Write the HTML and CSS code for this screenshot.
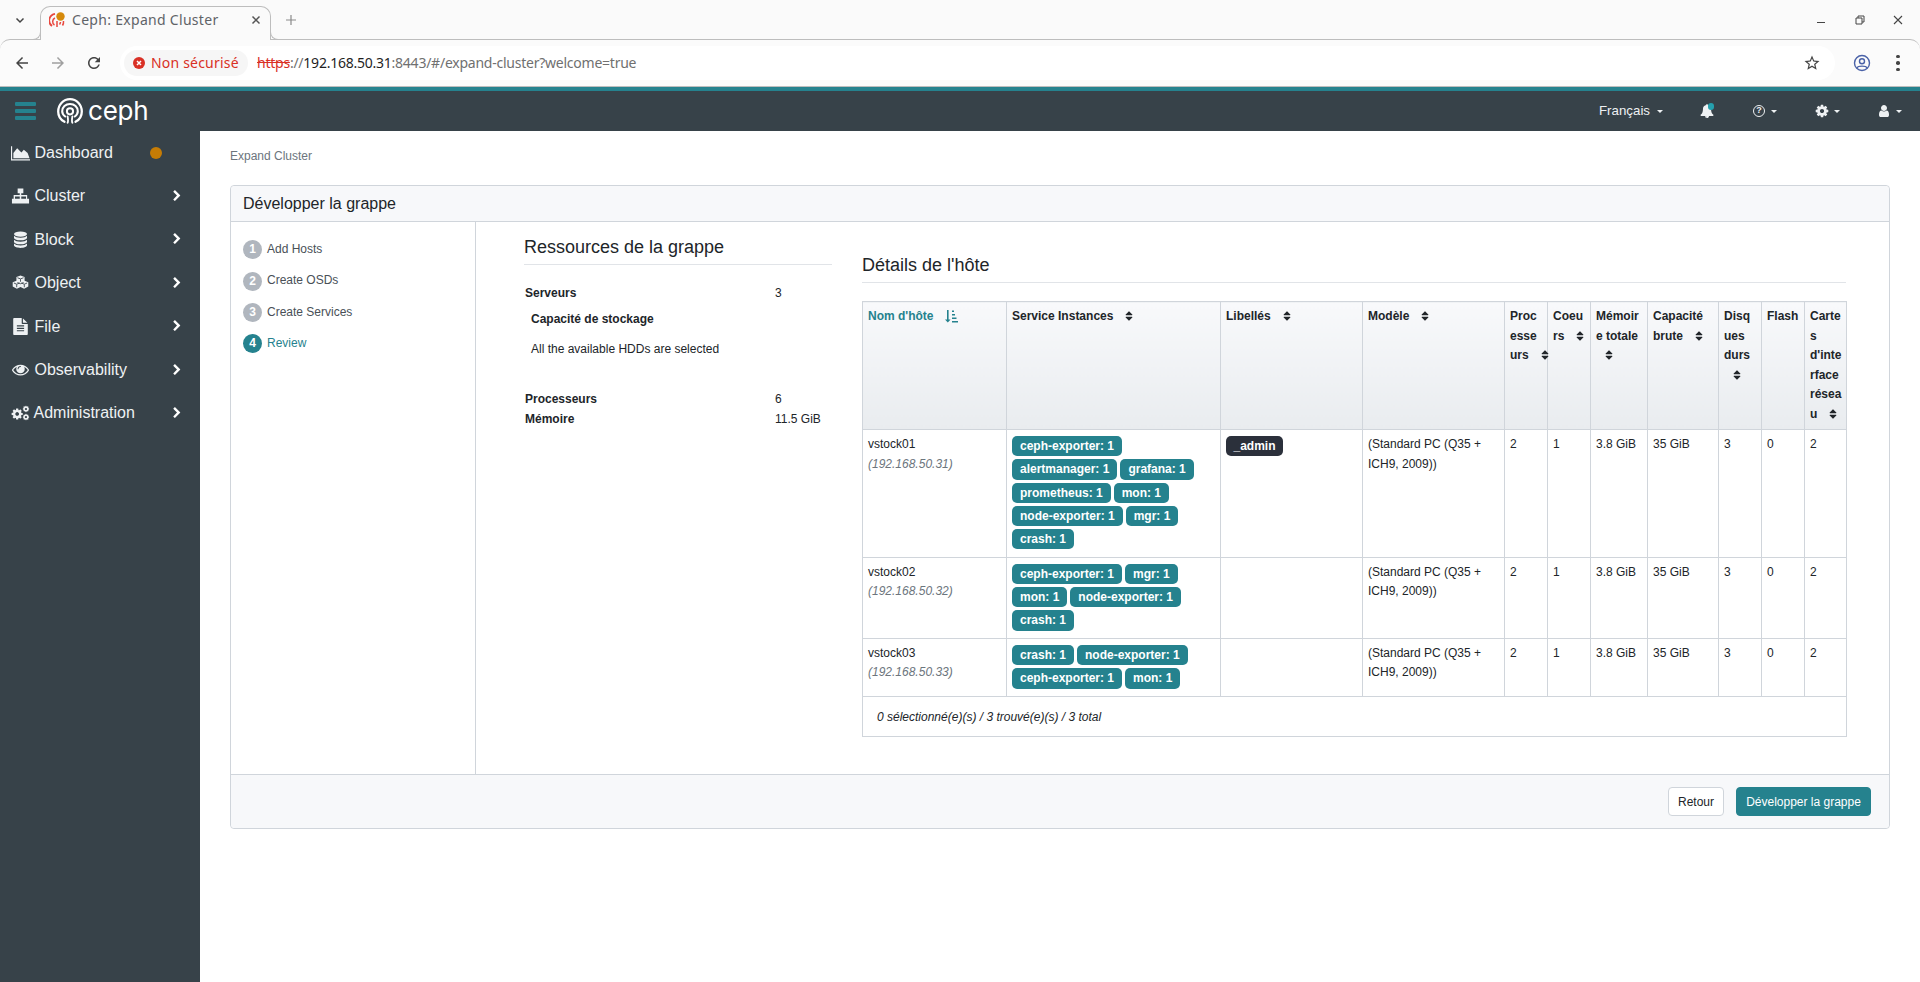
FILE: index.html
```html
<!DOCTYPE html>
<html lang="fr">
<head>
<meta charset="utf-8">
<title>Ceph: Expand Cluster</title>
<link rel="stylesheet" href="styles.css">
</head>
<body>
<svg class="defs" width="0" height="0" aria-hidden="true">
  <symbol id="i-sort" viewBox="0 0 1792 1792"><path d="M1408 1088q0 26-19 45l-448 448q-19 19-45 19t-45-19l-448-448q-19-19-19-45t19-45 45-19h896q26 0 45 19t19 45zm0-384q0 26-19 45t-45 19h-896q-26 0-45-19t-19-45 19-45l448-448q19-19 45-19t45 19l448 448q19 19 19 45z"/></symbol>
  <symbol id="i-chev" viewBox="0 0 1792 1792"><path d="M1363 877l-742 742q-19 19-45 19t-45-19l-166-166q-19-19-19-45t19-45l531-531-531-531q-19-19-19-45t19-45l166-166q19-19 45-19t45 19l742 742q19 19 19 45t-19 45z"/></symbol>
  <symbol id="i-cog" viewBox="0 0 1792 1792"><path transform="translate(896 896) scale(1.05) translate(-896 -896)" d="M1152 896q0-106-75-181t-181-75-181 75-75 181 75 181 181 75 181-75 75-181zm512-109v222q0 12-8 23t-20 13l-185 28q-19 54-39 91 35 50 107 138 10 12 10 25t-9 23q-27 37-99 108t-94 71q-12 0-26-9l-138-108q-44 23-91 38-16 136-29 186-7 28-36 28h-222q-14 0-24.500-8.500t-11.500-21.500l-28-184q-49-16-90-37l-141 107q-10 9-25 9-14 0-25-11-126-114-165-168-7-10-7-23 0-12 8-23 15-21 51-66.500t54-70.500q-27-50-41-99l-183-27q-13-2-21-12.500t-8-23.500v-222q0-12 8-23t19-13l186-28q14-46 39-92-40-57-107-138-10-12-10-24 0-10 9-23 26-36 98.500-107.500t94.500-71.500q13 0 26 10l138 107q44-23 91-38 16-136 29-186 7-28 36-28h222q14 0 24.500 8.500t11.500 21.500l28 184q49 16 90 37l142-107q9-9 24-9 13 0 25 10 129 119 165 170 7 8 7 22 0 12-8 23-15 21-51 66.500t-54 70.500q26 50 41 98l183 28q13 2 21 12.500t8 23.500z"/></symbol>
</svg>

<header class="chrome">
  <div class="tabstrip">
    <svg class="tab-list" viewBox="0 0 12 12"><path d="M2.500 4.500 6 8l3.500-3.500" fill="none" stroke="#444" stroke-width="1.500"/></svg>
    <div class="tab">
      <svg class="favicon" viewBox="0 0 16 16">
        <path d="M3 14A6.800 6.800 0 0 1 6 1.800" fill="none" stroke="#e8483f" stroke-width="1.800"/>
        <path d="M5.500 13A4 4 0 0 1 6 6" fill="none" stroke="#e8483f" stroke-width="1.500"/>
        <path d="M13.500 13.500A6.800 6.800 0 0 0 14.500 9M10.500 12.500A4 4 0 0 0 11.500 10M8 15V9" fill="none" stroke="#e8483f" stroke-width="1.500"/>
        <circle cx="11.500" cy="4.500" r="4.200" fill="#d68a0c"/>
      </svg>
      <span class="tab-title">Ceph: Expand Cluster</span>
      <svg class="tab-close" viewBox="0 0 10 10"><path d="M1.500 1.500l7 7m0-7l-7 7" stroke="#555" stroke-width="1.500"/></svg>
    </div>
    <svg class="tab-new" viewBox="0 0 12 12"><path d="M6 1v10M1 6h10" stroke="#8a8a8a" stroke-width="1.200"/></svg>
    <div class="win-controls">
      <svg viewBox="0 0 12 12"><path d="M1 8.500h8" stroke="#444" stroke-width="1"/></svg>
      <svg viewBox="0 0 12 12"><path d="M2 4h6v6H2zM4 4V2h6v6H8" fill="none" stroke="#444" stroke-width="1"/></svg>
      <svg viewBox="0 0 12 12"><path d="M2 2l8 8m0-8l-8 8" stroke="#444" stroke-width="1.100"/></svg>
    </div>
  </div>
  <div class="toolbar">
    <svg class="tool-icon" viewBox="0 0 24 24"><path fill="#444" d="M20 11H7.830l5.590-5.590L12 4l-8 8 8 8 1.410-1.410L7.830 13H20v-2z"/></svg>
    <svg class="tool-icon" viewBox="0 0 24 24"><path fill="#a0a0a0" d="M4 11h12.170l-5.590-5.590L12 4l8 8-8 8-1.410-1.410L16.170 13H4v-2z"/></svg>
    <svg class="tool-icon" viewBox="0 0 24 24"><path fill="#444" d="M17.650 6.350C16.200 4.900 14.210 4 12 4c-4.420 0-7.990 3.580-7.990 8s3.570 8 7.990 8c3.730 0 6.840-2.550 7.730-6h-2.080c-.82 2.330-3.040 4-5.650 4-3.310 0-6-2.690-6-6s2.690-6 6-6c1.660 0 3.140.69 4.220 1.780L13 11h7V4l-2.350 2.350z"/></svg>
    <div class="omnibox">
      <div class="sec-chip">
        <svg class="sec-icon" viewBox="0 0 12 12"><circle cx="6" cy="6" r="6" fill="#d93025"/><path d="M4 4l4 4m0-4l-4 4" stroke="#fff" stroke-width="1.500"/></svg>
        <span>Non sécurisé</span>
      </div>
      <div class="url"><s class="url-https">https</s><span class="url-dim">://</span><span class="url-host">192.168.50.31</span><span class="url-dim">:8443/#/expand-cluster?welcome=true</span></div>
      <svg class="star" viewBox="0 0 24 24"><path fill="#444" d="M22 9.240l-7.190-.62L12 2 9.190 8.630 2 9.240l5.460 4.730L5.820 21 12 17.270 18.180 21l-1.630-7.030L22 9.240zM12 15.400l-3.760 2.270 1-4.280-3.320-2.880 4.380-.38L12 6.100l1.710 4.040 4.380.38-3.320 2.880 1 4.280L12 15.400z"/></svg>
    </div>
    <svg class="profile" viewBox="0 0 18 18"><circle cx="9" cy="9" r="7.500" fill="none" stroke="#4a62a8" stroke-width="1.400"/><circle cx="9" cy="7.200" r="2.500" fill="none" stroke="#4a62a8" stroke-width="1.400"/><path d="M4 14c1-2.500 9-2.500 10 0" fill="none" stroke="#4a62a8" stroke-width="1.400"/></svg>
    <div class="kebab"><i></i><i></i><i></i></div>
  </div>
</header>

<nav class="navbar">
  <div class="hamburger"><i></i><i></i><i></i></div>
  <svg class="logo" viewBox="0 0 26 26">
    <path d="M7.500 23.800C3.500 21.800 1.200 18 1.200 13.500 1.200 6.600 6.500 1.200 13 1.200s11.800 5.400 11.800 12.300c0 4.500-2.300 8.300-6.300 10.300" fill="none" stroke="#fff" stroke-width="2.300" stroke-linecap="round"/>
    <path d="M8.200 18.500c-1.900-1.300-3-3.100-3-5.200C5.200 9.100 8.600 6 13 6s7.800 3.100 7.800 7.300c0 2.100-1.100 3.900-3 5.200" fill="none" stroke="#fff" stroke-width="2.100" stroke-linecap="round"/>
    <circle cx="13" cy="13.300" r="3.100" fill="none" stroke="#fff" stroke-width="2"/>
    <path d="M10.600 24.800c.9-1.500.4-3.800 0-6.500M15.400 24.800c-.9-1.500-.4-3.800 0-6.500" fill="none" stroke="#fff" stroke-width="1.800" stroke-linecap="round"/>
  </svg>
  <span class="logo-text">ceph</span>
  <div class="nav-right">
    <div class="nav-item nav-lang"><span>Français</span><b class="caret"></b></div>
    <div class="nav-item nav-bell">
      <svg class="nav-icon" viewBox="0 0 1792 1792"><path d="M912 1696q0-16-16-16-59 0-101.500-42.500t-42.500-101.500q0-16-16-16t-16 16q0 73 51.500 124.500t124.500 51.500q16 0 16-16zm816-288q0 52-38 90t-90 38h-448q0 106-75 181t-181 75-181-75-75-181h-448q-52 0-90-38t-38-90q50-42 91-88t85-119.500 74.500-158.500 50-206 19.500-260q0-152 117-282.500t307-158.500q-8-19-8-39 0-40 28-68t68-28 68 28 28 68q0 20-8 39 190 28 307 158.500t117 282.500q0 139 19.500 260t50 206 74.500 158.500 85 119.500 91 88z"/></svg>
      <i class="bell-dot"></i>
    </div>
    <div class="nav-item nav-help">
      <span class="help-ring">?</span><b class="caret caret-help"></b>
    </div>
    <div class="nav-item nav-gear">
      <svg class="nav-icon"><use href="#i-cog"/></svg><b class="caret"></b>
    </div>
    <div class="nav-item nav-user">
      <svg class="nav-icon" viewBox="0 0 1792 1792"><path d="M1536 1399q0 109-62.500 187t-150.500 78h-854q-88 0-150.500-78t-62.500-187q0-85 8.500-160.500t31.500-151.500 58.500-130 94-88.500 134.500-34.500q131 128 313 128t313-128q76 0 134.500 34.500t94 88.500 58.500 130 31.500 151.500 8.500 160.500zm-256-887q0 159-112.500 271.500t-271.500 112.500-271.500-112.500-112.500-271.500 112.500-271.500 271.500-112.500 271.500 112.500 112.500 271.500z"/></svg><b class="caret"></b>
    </div>
  </div>
</nav>

<div class="app">
  <aside class="sidebar">
    <div class="side-item">
      <svg class="side-icon" viewBox="0 0 20 16"><path d="M0 1h1.200v13.600H20V16H0z"/><path d="M2.500 13.500V8l4-5 4.500 4.500 2.500-3 4 3.500 2 5.500z"/></svg>
      <span class="side-label">Dashboard</span><i class="status-dot"></i>
    </div>
    <div class="side-item">
      <svg class="side-icon" viewBox="0 0 20 16"><path d="M7 0h6v5h-2.200v2H17v4h2v5h-6v-5h2.800V8.500h-5V11H13v5H7v-5h2.200V8.500h-5V11H7v5H1v-5h1.800V7h6.400V5H7z"/></svg>
      <span class="side-label">Cluster</span><svg class="chev"><use href="#i-chev"/></svg>
    </div>
    <div class="side-item">
      <svg class="side-icon side-icon-tall" viewBox="0 0 19 19.600"><g transform="translate(-.5 0)"><ellipse cx="10" cy="3.500" rx="7.500" ry="3"/><path d="M2.500 5.500v2.300c0 1.700 3.400 3 7.500 3s7.500-1.300 7.500-3V5.500c-1.300 1.500-4 2.300-7.500 2.300S3.800 7 2.500 5.500zM2.500 10v2.300c0 1.700 3.400 3 7.500 3s7.500-1.300 7.500-3V10c-1.300 1.500-4 2.300-7.500 2.300S3.800 11.500 2.500 10zM2.500 14.400v2.100c0 1.700 3.400 3 7.500 3s7.500-1.300 7.500-3v-2.100c-1.300 1.500-4 2.300-7.500 2.300s-6.200-.8-7.500-2.300z"/></g></svg>
      <span class="side-label">Block</span><svg class="chev"><use href="#i-chev"/></svg>
    </div>
    <div class="side-item">
      <svg class="side-icon side-icon-tall" viewBox="0 0 20 16"><path d="M10 .5l4.300 1.600v4.100l3.900 1.500v4.500l-4.400 2.300L10 12.700l-3.800 1.800-4.400-2.300V7.700l3.900-1.500V2.100z" fill="#eef1f3"/><path d="M6.800 3l3.200 1.200L13.200 3M6.800 8l3.200 1.300L13.200 8M3 8.500l3 1.300 3-1.200M11 8.600l3 1.200 3-1.300M6 10v3M14 10v3M10 4.500v2.700" fill="none" stroke="#374249" stroke-width=".9"/></svg>
      <span class="side-label">Object</span><svg class="chev"><use href="#i-chev"/></svg>
    </div>
    <div class="side-item">
      <svg class="side-icon side-icon-tall" viewBox="0 0 1792 1792"><path d="M1596 476q14 14 28 36h-472v-472q22 14 36 28zm-476 164h544v1056q0 40-28 68t-68 28h-1344q-40 0-68-28t-28-68v-1600q0-40 28-68t68-28h800v544q0 40 28 68t68 28zm160 736v-64q0-14-9-23t-23-9h-704q-14 0-23 9t-9 23v64q0 14 9 23t23 9h704q14 0 23-9t9-23zm0-256v-64q0-14-9-23t-23-9h-704q-14 0-23 9t-9 23v64q0 14 9 23t23 9h704q14 0 23-9t9-23zm0-256v-64q0-14-9-23t-23-9h-704q-14 0-23 9t-9 23v64q0 14 9 23t23 9h704q14 0 23-9t9-23z"/></svg>
      <span class="side-label">File</span><svg class="chev"><use href="#i-chev"/></svg>
    </div>
    <div class="side-item">
      <svg class="side-icon side-icon-tall" viewBox="0 0 1792 1792"><path d="M1664 960q-152-236-381-353 61 104 61 225 0 185-131.500 316.500t-316.500 131.500-316.500-131.500-131.500-316.500q0-121 61-225-229 117-381 353 133 205 333.500 326.500t434.500 121.500 434.500-121.500 333.500-326.500zm-720-384q0-20-14-34t-34-14q-125 0-214.500 89.500t-89.500 214.500q0 20 14 34t34 14 34-14 14-34q0-86 61-147t147-61q20 0 34-14t14-34zm848 384q0 34-20 69-140 230-376.500 368.500t-499.500 138.500-499.500-139-376.500-368q-20-35-20-69t20-69q140-229 376.500-368t499.500-139 499.500 139 376.500 368q20 35 20 69z"/></svg>
      <span class="side-label">Observability</span><svg class="chev"><use href="#i-chev"/></svg>
    </div>
    <div class="side-item">
      <svg class="side-icon side-cogs" viewBox="0 0 20 16">
        <use href="#i-cog" x="0" y="2.500" width="13" height="13"/>
        <use href="#i-cog" x="12" y="0" width="7.500" height="7.500"/>
        <use href="#i-cog" x="12" y="8.500" width="7.500" height="7.500"/>
      </svg>
      <span class="side-label side-label-tight">Administration</span><svg class="chev"><use href="#i-chev"/></svg>
    </div>
  </aside>

  <main class="main">
    <div class="breadcrumb">Expand Cluster</div>
    <section class="card">
      <div class="card-header">Développer la grappe</div>
      <div class="card-body">
        <ol class="steps">
          <li class="step"><span class="step-num">1</span><span>Add Hosts</span></li>
          <li class="step"><span class="step-num">2</span><span>Create OSDs</span></li>
          <li class="step"><span class="step-num">3</span><span>Create Services</span></li>
          <li class="step step-active"><span class="step-num">4</span><span>Review</span></li>
        </ol>
        <div class="review">
          <div class="resources">
            <h4 class="section-title">Ressources de la grappe</h4>
            <div class="kv kv-first"><b>Serveurs</b><span>3</span></div>
            <div class="sub-title">Capacité de stockage</div>
            <div class="sub-text">All the available HDDs are selected</div>
            <div class="kv kv-proc"><b>Processeurs</b><span>6</span></div>
            <div class="kv"><b>Mémoire</b><span>11.5 GiB</span></div>
          </div>
          <div class="details">
            <h4 class="section-title">Détails de l'hôte</h4>
            <table class="hosts">
              <colgroup>
                <col class="c-host"><col class="c-svc"><col class="c-label"><col class="c-model"><col class="c-num"><col class="c-num"><col class="c-mem"><col class="c-cap"><col class="c-num"><col class="c-num"><col class="c-last">
              </colgroup>
              <thead>
                <tr>
                  <th class="sorted">Nom d'hôte <svg class="sort-amt" viewBox="0 0 14 14"><path d="M3 1v9.500H1l2.800 3 2.800-3H4.600V1zM8 1.500h2V3H8zM8 5h3v1.500H8zM8 8.500h4.500V10H8zM8 12h6v1.500H8z"/></svg></th>
                  <th>Service Instances <svg class="sort"><use href="#i-sort"/></svg></th>
                  <th>Libellés <svg class="sort"><use href="#i-sort"/></svg></th>
                  <th>Modèle <svg class="sort"><use href="#i-sort"/></svg></th>
                  <th>Processeurs <svg class="sort"><use href="#i-sort"/></svg></th>
                  <th>Coeurs <svg class="sort"><use href="#i-sort"/></svg></th>
                  <th>Mémoire totale <svg class="sort"><use href="#i-sort"/></svg></th>
                  <th>Capacité brute <svg class="sort"><use href="#i-sort"/></svg></th>
                  <th>Disques durs <svg class="sort"><use href="#i-sort"/></svg></th>
                  <th>Flash</th>
                  <th>Cartes d'interface réseau <svg class="sort"><use href="#i-sort"/></svg></th>
                </tr>
              </thead>
              <tbody>
                <tr>
                  <td>vstock01<br><em class="ip">(192.168.50.31)</em></td>
                  <td><div class="badges"><span class="badge">ceph-exporter: 1</span><span class="badge">alertmanager: 1</span><span class="badge">grafana: 1</span><span class="badge">prometheus: 1</span><span class="badge">mon: 1</span><span class="badge">node-exporter: 1</span><span class="badge">mgr: 1</span><span class="badge">crash: 1</span></div></td>
                  <td><div class="badges"><span class="badge badge-dark">_admin</span></div></td>
                  <td>(Standard PC (Q35 + ICH9, 2009))</td>
                  <td>2</td><td>1</td><td>3.8 GiB</td><td>35 GiB</td><td>3</td><td>0</td><td>2</td>
                </tr>
                <tr>
                  <td>vstock02<br><em class="ip">(192.168.50.32)</em></td>
                  <td><div class="badges"><span class="badge">ceph-exporter: 1</span><span class="badge">mgr: 1</span><span class="badge">mon: 1</span><span class="badge">node-exporter: 1</span><span class="badge">crash: 1</span></div></td>
                  <td></td>
                  <td>(Standard PC (Q35 + ICH9, 2009))</td>
                  <td>2</td><td>1</td><td>3.8 GiB</td><td>35 GiB</td><td>3</td><td>0</td><td>2</td>
                </tr>
                <tr>
                  <td>vstock03<br><em class="ip">(192.168.50.33)</em></td>
                  <td><div class="badges"><span class="badge">crash: 1</span><span class="badge">node-exporter: 1</span><span class="badge">ceph-exporter: 1</span><span class="badge">mon: 1</span></div></td>
                  <td></td>
                  <td>(Standard PC (Q35 + ICH9, 2009))</td>
                  <td>2</td><td>1</td><td>3.8 GiB</td><td>35 GiB</td><td>3</td><td>0</td><td>2</td>
                </tr>
              </tbody>
              <tfoot>
                <tr><td colspan="11" class="table-foot">0 sélectionné(e)(s) / 3 trouvé(e)(s) / 3 total</td></tr>
              </tfoot>
            </table>
          </div>
        </div>
      </div>
      <div class="card-footer">
        <button class="btn btn-light">Retour</button>
        <button class="btn btn-primary">Développer la grappe</button>
      </div>
    </section>
  </main>
</div>
</body>
</html>
```
FILE: styles.css
```css
* { box-sizing: border-box; }
html, body { margin: 0; padding: 0; height: 982px; overflow: hidden; background: #fff; }
body { font-family: "Liberation Sans", Arial, sans-serif; font-size: 13px; line-height: 19.5px; color: #212529; display: flex; flex-direction: column; }
.defs { position: absolute; }

/* browser chrome */
.chrome { flex: none; background: #fafafa; font-family: "Noto Sans", sans-serif; }
.tabstrip { height: 39px; display: flex; align-items: flex-end; position: relative; }
.tab-list { width: 12px; height: 12px; margin: 0 14px 13px 14px; flex: none; }
.tab { position: relative; z-index: 1; width: 231px; height: 34px; margin-bottom: -1px; background: #fafafa; border: 1px solid #bdbdbd; border-bottom: 0; border-radius: 10px 10px 0 0; display: flex; align-items: center; padding: 0 9px 8px 8px; }
.tab::before, .tab::after { content: ""; position: absolute; bottom: 0; width: 8px; height: 8px; border-bottom: 1px solid #bdbdbd; }
.tab::before { left: -9px; border-right: 1px solid #bdbdbd; border-bottom-right-radius: 8px; }
.tab::after { right: -9px; border-left: 1px solid #bdbdbd; border-bottom-left-radius: 8px; }
.favicon { width: 16px; height: 16px; flex: none; }
.tab-title { margin-left: 7px; flex: 1; font-size: 14px; letter-spacing: .3px; line-height: 18px; color: #5f6368; white-space: nowrap; }
.tab-close { width: 10px; height: 10px; flex: none; }
.tab-new { width: 12px; height: 12px; margin: 0 0 13px 14px; flex: none; }
.win-controls { margin-left: auto; display: flex; gap: 26px; padding: 0 16px 13px 0; }
.win-controls svg { width: 12px; height: 12px; display: block; }
.toolbar { height: 48px; background: #fbfbfb; border-top: 1px solid #bdbdbd; border-bottom: 1px solid #bdbdbd; border-radius: 10px 10px 0 0; display: flex; align-items: center; padding: 0 20px 0 13px; }
.tool-icon { width: 18px; height: 18px; flex: none; margin-right: 18px; }
.tool-icon:nth-child(3) { margin-right: 17px; }
.omnibox { flex: 1; height: 34px; background: #fff; border-radius: 17px; display: flex; align-items: center; padding: 0 14px 0 4px; }
.sec-chip { height: 26px; width: 124px; background: #f6f6f6; border-radius: 13px; display: flex; align-items: center; padding-left: 9px; color: #d93025; font-size: 14px; letter-spacing: .2px; white-space: nowrap; flex: none; }
.sec-icon { width: 12px; height: 12px; margin-right: 6px; flex: none; }
.url { margin-left: 9px; font-size: 14px; white-space: nowrap; flex: 1; color: #707070; letter-spacing: -.24px; }
.url-https { color: #d93025; text-decoration: line-through; }
.url-host { color: #1f1f1f; }
.star { width: 18px; height: 18px; flex: none; }
.profile { width: 18px; height: 18px; margin-left: 18px; flex: none; }
.kebab { width: 4px; margin-left: 25px; display: flex; flex-direction: column; gap: 3px; flex: none; }
.kebab i { width: 3.500px; height: 3.500px; border-radius: 50%; background: #444; }

/* navbar */
.navbar { flex: none; height: 44px; background: #374249; border-top: 4px solid #25828e; display: flex; align-items: center; color: #fff; }
.hamburger { width: 21px; margin-left: 15px; display: flex; flex-direction: column; gap: 3.500px; flex: none; }
.hamburger i { height: 3.500px; background: #25828e; border-radius: 1px; }
.logo { width: 26px; height: 26px; margin-left: 21px; flex: none; }
.logo-text { margin-left: 5px; font-family: Inter, sans-serif; font-weight: 400; font-size: 26px; line-height: 30px; letter-spacing: -.2px; margin-top: -1px; color: #fff; }
.nav-right { margin-left: auto; display: flex; align-items: center; height: 100%; padding-right: 18px; color: #eef1f3; }
.nav-item { display: flex; align-items: center; position: relative; }
.nav-lang { font-size: 13.300px; margin-right: 37px; }
.nav-bell { margin-right: 39px; }
.nav-help { margin-right: 38px; }
.nav-gear { margin-right: 37px; }
.caret { width: 0; height: 0; margin-left: 5px; border-left: 3px solid transparent; border-right: 3px solid transparent; border-top: 3px solid #eef1f3; }
.nav-lang .caret { margin-left: 7px; border-width: 3.500px 3.500px 0; }
.caret-help { margin-left: 6px; }
.nav-icon { width: 14px; height: 14px; fill: #eef1f3; display: block; }
.bell-dot { position: absolute; top: -1px; right: 0; width: 6.500px; height: 6.500px; border-radius: 50%; background: #25a0ae; }
.help-ring { width: 12px; height: 12px; border: 1.500px solid #eef1f3; border-radius: 50%; font-size: 9px; line-height: 9px; font-weight: 700; text-align: center; }

/* layout */
.app { flex: 1; display: flex; min-height: 0; }
.sidebar { width: 200px; flex: none; background: #374249; color: #eef1f3; }
.side-item { display: flex; align-items: center; height: 43.400px; padding: 0 17px 0 11px; font-size: 16px; }
.side-icon { width: 19px; height: 16px; fill: #eef1f3; flex: none; margin-right: 4.500px; }
.side-icon-tall { height: 17px; }
.side-label { flex: 1; }
.side-label-tight { margin-left: -1px; }
.chev { width: 12px; height: 12px; fill: #fff; flex: none; }
.status-dot { width: 12px; height: 12px; border-radius: 50%; background: #c67c05; margin-right: 21px; flex: none; }

.main { flex: 1; min-width: 0; padding: 15px 30px 0 30px; }
.breadcrumb { font-size: 12px; line-height: 20px; color: #6c757d; margin-bottom: 19px; }

/* card */
.card { border: 1px solid #d0d5db; border-radius: 4px; }
.card-header { height: 36px; background: #f7f8fa; border-bottom: 1px solid #d0d5db; border-radius: 4px 4px 0 0; padding: 0 12px; font-size: 16px; line-height: 35px; }
.card-body { height: 552px; display: flex; }
.steps { width: 245px; flex: none; margin: 0; padding: 18.400px 0 0 12px; list-style: none; border-right: 1px solid #d0d5db; font-size: 12px; }
.step { display: flex; align-items: center; height: 19px; margin-bottom: 12.300px; color: #495057; }
.step-num { width: 19px; height: 19px; margin-right: 5px; border-radius: 50%; background: #b0b6be; color: #fff; font-weight: 700; text-align: center; line-height: 19px; flex: none; }
.step-active { color: #25828e; }
.step-active .step-num { background: #25828e; }

.review { flex: 1; min-width: 0; display: flex; padding-left: 48px; font-size: 12px; }
.resources { width: 308px; flex: none; padding-top: 14px; }
.details { width: 983.500px; flex: none; margin-left: 30px; padding-top: 32px; }
.section-title { margin: 0; font-size: 18px; line-height: 22px; font-weight: 400; padding-bottom: 6px; border-bottom: 1px solid #e1e4e8; }
.kv { display: grid; grid-template-columns: 250px 1fr; padding-left: 1px; }
.kv-first { margin-top: 19px; }
.sub-title { padding-left: 7px; margin-top: 6.500px; font-weight: 700; }
.sub-text { padding-left: 7px; margin-top: 10.500px; }
.kv-proc { margin-top: 30.800px; }

/* table */
.hosts { width: 983.500px; margin-top: 18px; table-layout: fixed; border-collapse: collapse; font-size: 12px; }
.c-host { width: 144px; }
.c-svc { width: 214px; }
.c-label, .c-model { width: 142px; }
.c-num { width: 43px; }
.c-mem { width: 57px; }
.c-cap { width: 71px; }
.c-last { width: 41.500px; }
.hosts th, .hosts td { border: 1px solid #d0d5db; padding: 5px; vertical-align: top; text-align: left; }
.hosts th { background: linear-gradient(#f8f9fb, #e9ecef); font-weight: 700; word-break: break-word; }
.hosts th:last-child { padding-right: 3px; }
.hosts td { word-break: normal; }
.sort { width: 12px; height: 12px; fill: #212529; margin-left: 6.500px; margin-right: -10.500px; vertical-align: -2px; }
.sorted { color: #25828e; }
.sort-amt { width: 14px; height: 14px; fill: #25828e; margin-left: 7px; vertical-align: -3px; }
.ip { color: #6c757d; }
.badges { display: flex; flex-wrap: wrap; gap: 3px; padding: 1px 0 2.300px; }
.badge { height: 20.300px; padding: 0 8px; border-radius: 5px; background: #25828e; color: #fff; font-weight: 700; font-size: 12px; line-height: 20.300px; white-space: nowrap; }
.badge-dark { background: #2b303b; padding: 0 7.500px; }
.hosts .table-foot { height: 40px; padding: 3px 0 0 14px; vertical-align: middle; font-style: italic; }

.card-footer { height: 54px; background: #f7f8fa; border-top: 1px solid #d0d5db; border-radius: 0 0 4px 4px; display: flex; justify-content: flex-end; align-items: center; gap: 12px; padding: 0 18px 0 0; }
.btn { height: 29px; border-radius: 4px; font-family: inherit; font-size: 12px; padding: 0; }
.btn-light { width: 56px; background: #fff; border: 1px solid #d0d5db; color: #212529; }
.btn-primary { width: 135px; background: #25828e; border: 1px solid #25828e; color: #fff; }
```
